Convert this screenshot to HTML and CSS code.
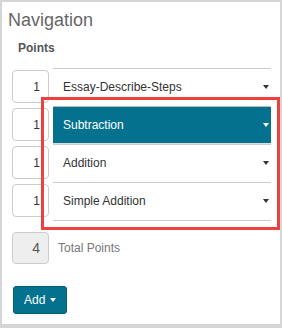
FILE: index.html
```html
<!DOCTYPE html>
<html>
<head>
<meta charset="utf-8">
<link rel="stylesheet" href="styles.css">
</head>
<body>
<div class="panel">
  <h1 class="title">Navigation</h1>
  <div class="label">Points</div>
  <div class="rows">
    <div class="row">
      <div class="num">1</div>
      <div class="select"><span>Essay-Describe-Steps</span><i class="caret"></i></div>
    </div>
    <div class="row">
      <div class="num">1</div>
      <div class="select active"><span>Subtraction</span><i class="caret"></i></div>
    </div>
    <div class="row">
      <div class="num">1</div>
      <div class="select"><span>Addition</span><i class="caret"></i></div>
    </div>
    <div class="row last">
      <div class="num">1</div>
      <div class="select"><span>Simple Addition</span><i class="caret"></i></div>
    </div>
  </div>
  <div class="total">
    <div class="num total-num">4</div>
    <span class="total-label">Total Points</span>
  </div>
  <div class="actions">
    <button class="add-btn">Add<i class="caret caret-white"></i></button>
  </div>
  <div class="highlight"></div>
</div>
</body>
</html>
```

FILE: styles.css
```css
* { box-sizing: border-box; }
html, body { margin: 0; padding: 0; }
body {
  background: #d5d5d5;
  width: 282px;
  height: 328px;
  font-family: "Liberation Sans", Arial, sans-serif;
  overflow: hidden;
}
.panel {
  position: relative;
  margin: 2px 0 0 2px;
  width: 278px;
  height: 322px;
  background: #fff;
  overflow: visible;
}
.title {
  margin: 0;
  padding: 8px 0 0 6px;
  font-size: 18px;
  font-weight: normal;
  line-height: 20px;
  color: #666;
}
.label {
  margin-top: 10px;
  padding-left: 16px;
  font-size: 12px;
  font-weight: bold;
  line-height: 16px;
  color: #555;
}
.rows {
  margin-top: 12px;
  padding-left: 10px;
}
.row {
  display: grid;
  grid-template-columns: 37px 218px;
  column-gap: 4px;
  height: 38px;
}
.row.last { height: 39px; }
.num {
  margin-top: 2px;
  height: 33px;
  border: 1px solid #ccc;
  border-radius: 4px;
  font-size: 12px;
  color: #333;
  display: flex;
  align-items: center;
  justify-content: flex-end;
  padding-right: 8px;
  background: #fff;
}
.select {
  border-top: 1px solid #ccc;
  height: 38px;
  display: flex;
  align-items: center;
  justify-content: space-between;
  padding: 0 2px 1px 10px;
  font-size: 12px;
  color: #333;
}
.row.last .select { border-bottom: 1px solid #ccc; height: 39px; }
.select.active {
  background: #04728f;
  color: #fff;
  border-top-color: #bbb;
  border-bottom: 1px solid #ddd;
}
.caret {
  display: inline-block;
  width: 0;
  height: 0;
  border-left: 3.5px solid transparent;
  border-right: 3.5px solid transparent;
  border-top: 4px solid #333;
}
.select.active .caret { border-top-color: #fff; }
.total {
  margin-top: 11px;
  padding-left: 10px;
  display: flex;
  align-items: center;
  gap: 9px;
}
.total-num {
  margin-top: 0;
  width: 37px;
  height: 32px;
  background: #eee;
  color: #555;
  font-size: 14px;
}
.total-label {
  font-size: 12px;
  color: #777;
}
.actions {
  margin-top: 22px;
  padding-left: 11px;
}
.add-btn {
  width: 54px;
  height: 28px;
  background: #04728f;
  border: 1px solid #035e77;
  border-radius: 3px;
  color: #fff;
  font-family: "Liberation Sans", Arial, sans-serif;
  font-size: 12px;
  padding: 0 0 0 10px;
  display: flex;
  align-items: center;
  gap: 5px;
}
.caret-white { border-top-color: #fff; }
.highlight {
  position: absolute;
  left: 39px;
  top: 95px;
  width: 239px;
  height: 133px;
  border: 3px solid #ef4040;
}
```
